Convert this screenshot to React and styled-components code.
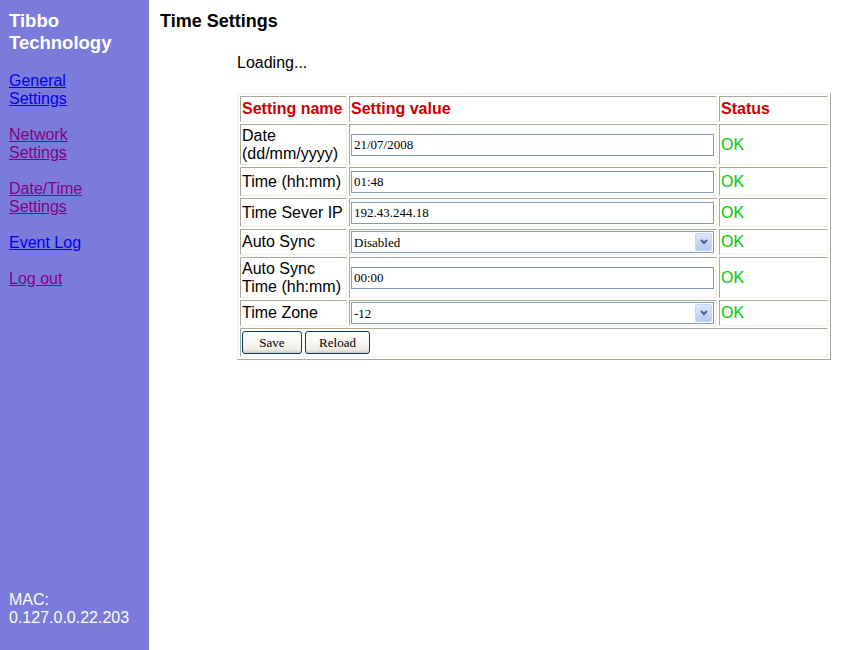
import styled, { createGlobalStyle } from 'styled-components';

const GlobalStyle = createGlobalStyle`
  body {
    margin: 0;
    font-family: "Liberation Sans", Arial, sans-serif;
    background: #fff;
  }
`;

const Page = styled.div`
  display: flex;
  width: 850px;
  height: 650px;
`;

const Sidebar = styled.div`
  width: 149px;
  flex-shrink: 0;
  background: #7b7bdc;
  padding: 10px 0 23px 9px;
  box-sizing: border-box;
  display: flex;
  flex-direction: column;
  justify-content: space-between;
`;

const Brand = styled.div`
  color: #fff;
  font-weight: bold;
  font-size: 18.5px;
  line-height: 22px;
  margin-bottom: 18px;
`;

const NavLink = styled.a`
  display: block;
  font-size: 16px;
  line-height: 18px;
  margin-bottom: 18px;
  color: ${(p) => (p.visited ? '#800080' : '#0000ee')};
  text-decoration: underline;
`;

const Mac = styled.div`
  color: #fff;
  font-size: 16px;
  line-height: 18px;
`;

const Main = styled.div`
  flex: 1;
  padding: 11px 0 0 11px;
`;

const Title = styled.h1`
  margin: 0;
  font-size: 18px;
  line-height: 20px;
  font-weight: bold;
  color: #000;
`;

const Content = styled.div`
  padding: 23px 0 0 77px;
`;

const Loading = styled.div`
  font-size: 16px;
  line-height: 18px;
  margin-bottom: 21px;
`;

const Table = styled.table`
  width: 594px;
  border-collapse: separate;
  border-spacing: 2px;
  border: 1px solid;
  border-color: #f1efe2 #aca899 #aca899 #f1efe2;
`;

const Cell = styled.td`
  box-sizing: content-box;
  border: 1px solid;
  border-color: #aca899 #f1efe2 #f1efe2 #aca899;
  padding: 1px;
  font-size: 16px;
  line-height: 18px;
  vertical-align: middle;
  height: ${(p) => p.h || 'auto'};
  width: ${(p) => p.w || 'auto'};
  color: #000;
`;

const Head = styled(Cell).attrs({ as: 'th' })`
  text-align: left;
  color: #cc0000;
  font-weight: bold;
  height: 22px;
`;

const Ok = styled(Cell)`
  color: #00c800;
`;

const TextInput = styled.input`
  box-sizing: border-box;
  width: 363px;
  height: 22px;
  border: 1px solid #7f9db9;
  padding: 1px 2px;
  font-family: "Liberation Serif", "Times New Roman", serif;
  font-size: 13px;
  color: #000;
  outline: none;
  display: block;
`;

const SelectWrap = styled.div`
  position: relative;
  width: 363px;
  height: 22px;
`;

const Select = styled.select`
  box-sizing: border-box;
  width: 100%;
  height: 100%;
  appearance: none;
  border: 1px solid #7f9db9;
  border-radius: 0;
  background: #fff;
  padding: 0 2px;
  font-family: "Liberation Serif", "Times New Roman", serif;
  font-size: 13px;
  color: #000;
  outline: none;
  display: block;
`;

const DropButton = styled.span`
  position: absolute;
  right: 2px;
  top: 2px;
  width: 17px;
  height: 18px;
  border-radius: 2px;
  background: linear-gradient(#dde8fd, #b4c8f6);
  border: 1px solid #c3d3fd;
  box-sizing: border-box;
  display: flex;
  align-items: center;
  justify-content: center;
  pointer-events: none;
`;

const ButtonRow = styled.div`
  display: flex;
  gap: 3px;
`;

const Button = styled.button`
  height: 23px;
  width: ${(p) => p.w};
  border: 1px solid #003c74;
  border-radius: 3px;
  background: linear-gradient(#ffffff, #f0f0ea 80%, #d6d0c5);
  font-family: "Liberation Serif", "Times New Roman", serif;
  font-size: 13px;
  color: #000;
  padding: 0;
  box-shadow: inset 0 -1px 0 #d6d0c5;
`;

const Chevron = () => (
  <svg width="8" height="6" viewBox="0 0 8 6">
    <path d="M1 1 L4 4 L7 1" stroke="#4d6185" strokeWidth="2" fill="none" />
  </svg>
);

const SelectBox = ({ value, options }) => (
  <SelectWrap>
    <Select defaultValue={value}>
      {options.map((o) => (
        <option key={o}>{o}</option>
      ))}
    </Select>
    <DropButton>
      <Chevron />
    </DropButton>
  </SelectWrap>
);

const App = () => (
  <>
    <GlobalStyle />
    <Page>
      <Sidebar>
        <div>
          <Brand>
            Tibbo
            <br />
            Technology
          </Brand>
          <NavLink href="#">
            General
            <br />
            Settings
          </NavLink>
          <NavLink href="#" visited>
            Network
            <br />
            Settings
          </NavLink>
          <NavLink href="#" visited>
            Date/Time
            <br />
            Settings
          </NavLink>
          <NavLink href="#">Event Log</NavLink>
          <NavLink href="#" visited>
            Log out
          </NavLink>
        </div>
        <Mac>
          MAC:
          <br />
          0.127.0.0.22.203
        </Mac>
      </Sidebar>
      <Main>
        <Title>Time Settings</Title>
        <Content>
          <Loading>Loading...</Loading>
          <Table>
            <tbody>
              <tr>
                <Head w="103px">Setting name</Head>
                <Head w="364px">Setting value</Head>
                <Head w="105px">Status</Head>
              </tr>
              <tr>
                <Cell h="37px">
                  Date
                  <br />
                  (dd/mm/yyyy)
                </Cell>
                <Cell>
                  <TextInput defaultValue="21/07/2008" />
                </Cell>
                <Ok>OK</Ok>
              </tr>
              <tr>
                <Cell h="25px">Time (hh:mm)</Cell>
                <Cell>
                  <TextInput defaultValue="01:48" />
                </Cell>
                <Ok>OK</Ok>
              </tr>
              <tr>
                <Cell h="25px">Time Sever IP</Cell>
                <Cell>
                  <TextInput defaultValue="192.43.244.18" />
                </Cell>
                <Ok>OK</Ok>
              </tr>
              <tr>
                <Cell h="22px">Auto Sync</Cell>
                <Cell>
                  <SelectBox value="Disabled" options={['Disabled', 'Enabled']} />
                </Cell>
                <Ok>OK</Ok>
              </tr>
              <tr>
                <Cell h="37px">
                  Auto Sync
                  <br />
                  Time (hh:mm)
                </Cell>
                <Cell>
                  <TextInput defaultValue="00:00" />
                </Cell>
                <Ok>OK</Ok>
              </tr>
              <tr>
                <Cell h="22px">Time Zone</Cell>
                <Cell>
                  <SelectBox value="-12" options={['-12', '-11', '0', '+12']} />
                </Cell>
                <Ok>OK</Ok>
              </tr>
              <tr>
                <Cell colSpan={3} h="25px">
                  <ButtonRow>
                    <Button w="60px">Save</Button>
                    <Button w="65px">Reload</Button>
                  </ButtonRow>
                </Cell>
              </tr>
            </tbody>
          </Table>
        </Content>
      </Main>
    </Page>
  </>
);

export default App;
